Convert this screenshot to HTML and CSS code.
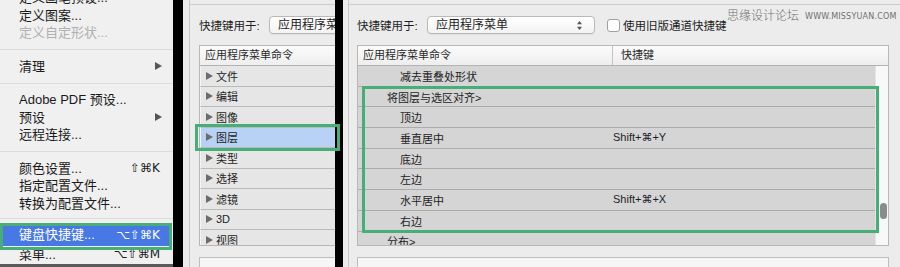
FILE: index.html
```html
<!DOCTYPE html>
<html lang="zh-CN">
<head>
    <meta charset="UTF-8">
    <title>键盘快捷键</title>
    <link rel="stylesheet" href="styles.css">
</head>
<body>
	<div class="menu">
		<ul class="menu-list">
			<li class="item">定义画笔预设...</li>
			<li class="item">定义图案...</li>
			<li class="item off">定义自定形状...</li>
			<li class="sep"></li>
			<li class="item">清理<span class="sub"></span></li>
			<li class="sep"></li>
			<li class="item">Adobe PDF 预设...</li>
			<li class="item">预设<span class="sub"></span></li>
			<li class="item">远程连接...</li>
			<li class="sep"></li>
			<li class="item">颜色设置...<span class="key">⇧⌘K</span></li>
			<li class="item">指定配置文件...</li>
			<li class="item">转换为配置文件...</li>
			<li class="sep sep-short"></li>
			<li class="item on">键盘快捷键...<span class="key">⌥⇧⌘K</span></li>
			<li class="item">菜单...<span class="key">⌥⇧⌘M</span></li>
		</ul>
	</div>

	<div class="dlg dlg-mid">
		<div class="frame">
			<div class="frame-top"></div>
			<div class="frame-body">
				<div class="bar">
					<span class="lbl">快捷键用于:</span>
					<div class="select">应用程序菜单</div>
				</div>
				<div class="tree">
					<div class="tree-head">应用程序菜单命令</div>
					<div class="tree-body">
						<div class="node"><i class="tri"></i>文件</div>
						<div class="node"><i class="tri"></i>编辑</div>
						<div class="node"><i class="tri"></i>图像</div>
						<div class="node sel"><i class="tri"></i>图层</div>
						<div class="node"><i class="tri"></i>类型</div>
						<div class="node"><i class="tri"></i>选择</div>
						<div class="node"><i class="tri"></i>滤镜</div>
						<div class="node"><i class="tri"></i>3D</div>
						<div class="node"><i class="tri"></i>视图</div>
					</div>
				</div>
				<div class="lower"></div>
			</div>
		</div>
	</div>

	<div class="dlg dlg-main">
		<div class="frame">
			<div class="frame-top"></div>
			<div class="frame-body">
				<div class="bar">
					<span class="lbl">快捷键用于:</span>
					<div class="select select-wide">应用程序菜单
						<svg class="updown" width="5" height="9" viewBox="0 0 5 9"><path d="M2.5 0 L5 3.2 L0 3.2 Z M2.5 9 L5 5.8 L0 5.8 Z" fill="#555"/></svg>
					</div>
					<span class="check"></span>
					<span class="check-lbl">使用旧版通道快捷键</span>
				</div>
				<div class="grid">
					<div class="grid-head">
						<div class="col-cmd">应用程序菜单命令</div>
						<div class="col-key">快捷键</div>
					</div>
					<div class="grid-body">
						<div class="rows">
							<div class="row"><span class="col-cmd lv2">减去重叠处形状</span></div>
							<div class="row"><span class="col-cmd lv1">将图层与选区对齐&gt;</span></div>
							<div class="row"><span class="col-cmd lv2">顶边</span></div>
							<div class="row"><span class="col-cmd lv2">垂直居中</span><span class="col-key">Shift+⌘+Y</span></div>
							<div class="row"><span class="col-cmd lv2">底边</span></div>
							<div class="row"><span class="col-cmd lv2">左边</span></div>
							<div class="row"><span class="col-cmd lv2">水平居中</span><span class="col-key">Shift+⌘+X</span></div>
							<div class="row"><span class="col-cmd lv2">右边</span></div>
							<div class="row"><span class="col-cmd lv1">分布&gt;</span></div>
						</div>
						<div class="track"><div class="thumb"></div></div>
					</div>
				</div>
				<div class="lower"></div>
			</div>
		</div>
	</div>

	<div class="watermark"><span class="wm-cn">思缘设计论坛</span><span class="wm-en">WWW.MISSYUAN.COM</span></div>

	<!-- 绿色标注框 -->
	<div class="mark mark-menu"></div>
	<div class="mark mark-mid"></div>
	<div class="mark mark-main"></div>
</body>
</html>
```

FILE: styles.css
```css
*{
	padding: 0;
	margin: 0;
	list-style: none;
	box-sizing: border-box;
}
body{
	width: 900px;
	height: 267px;
	overflow: hidden;
	position: relative;
	display: flex;
	background: #000;
	font-family: "Liberation Sans", "Noto Sans CJK SC", sans-serif;
	color: #1e1e1e;
}

/* 左边的菜单 */
.menu{
	width: 173px;
	margin-right: 10px;
	background: #f0f0f0;
	overflow: hidden;
	border-bottom: 3px solid #5a5a5a;
}
.menu-list{
	margin-top: -11px;
}
.menu .item{
	position: relative;
	height: 17.5px;
	line-height: 17.5px;
	padding-left: 19px;
	font-size: 13px;
	color: #1a1a1a;
	white-space: nowrap;
}
.menu .off{
	color: #b0b0b0;
}
.menu .sep{
	height: 16px;
	display: flex;
	align-items: center;
}
.menu .sep::after{
	content: "";
	flex: 1;
	height: 1px;
	background: #dcdcdc;
}
.menu .sep-short{
	height: 12px;
}
.menu .on{
	height: 22px;
	line-height: 22px;
	margin: 0 2px;
	padding-left: 17px;
	background: #4878e4;
	color: #fff;
}
.menu .sub{
	position: absolute;
	right: 11px;
	top: 4.5px;
	width: 0;
	height: 0;
	border-left: 7px solid #555;
	border-top: 4.5px solid transparent;
	border-bottom: 4.5px solid transparent;
}
.menu .key{
	position: absolute;
	right: 13px;
	top: 0;
	font-family: "DejaVu Sans", "Liberation Sans", sans-serif;
	font-size: 12px;
}
.menu .on .key{
	right: 11px;
}

/* 快捷键对话框 */
.dlg{
	background: #ececec;
	overflow: hidden;
	font-size: 11px;
}
.dlg-mid{
	width: 152px;
	margin-right: 8px;
	padding-left: 6px;
}
.dlg-main{
	flex: 1;
	padding-left: 5px;
}
.frame{
	height: 100%;
	border-left: 1px solid #c9c9c9;
}
.frame-top{
	height: 5px;
	border-bottom: 1px solid #cdcdcd;
}
.frame-body{
	padding-left: 9px;
}
.dlg-main .frame-body{
	padding-left: 8px;
}
.bar{
	margin-top: 10px;
	height: 20px;
	display: flex;
	align-items: center;
	white-space: nowrap;
	font-size: 11.5px;
}
.lbl{
	width: 70px;
	flex: none;
}
.select{
	flex: none;
	position: relative;
	width: 168px;
	height: 18px;
	line-height: 16px;
	padding-left: 8px;
	border: 1px solid #b9b9b9;
	border-radius: 4px;
	background: linear-gradient(#ffffff, #f3f3f3);
	box-shadow: 0 1px 0 rgba(0,0,0,0.06);
	font-size: 12px;
}
.updown{
	position: absolute;
	right: 12px;
	top: 4px;
}
.check{
	flex: none;
	width: 13px;
	height: 13px;
	margin-left: 12px;
	border: 1px solid #a0a0a0;
	border-radius: 3px;
	background: #fff;
}
.check-lbl{
	margin-left: 3px;
	font-size: 11.5px;
}

/* 中间的树 */
.tree{
	margin-top: 10px;
	width: 200px;
	border: 1px solid #b7b7b7;
	background: #fff;
}
.tree-head,.grid-head{
	height: 20px;
	line-height: 19px;
	padding-left: 5px;
	border-bottom: 1px solid #b3b3b3;
	background: linear-gradient(#fbfbfb, #eeeeee);
	color: #2a2a2a;
}
.tree-body{
	height: 179px;
	overflow: hidden;
	background: #e6e6e6;
}
.node{
	display: flex;
	align-items: center;
	height: 20.5px;
	padding-left: 5px;
	border-bottom: 1px solid #bababa;
	border-left: 1px solid #f4f4f4;
}
.node.sel{
	background: #b8d2f6;
}
.tri{
	width: 0;
	height: 0;
	margin-right: 3px;
	border-left: 7px solid #6c6c6c;
	border-top: 4.5px solid transparent;
	border-bottom: 4.5px solid transparent;
}

/* 右边的表格 */
.grid{
	margin-top: 10px;
	width: 532px;
	border: 1px solid #b7b7b7;
	background: #fff;
}
.grid-head{
	display: flex;
	padding-left: 0;
}
.grid-head .col-cmd{
	width: 255px;
	padding-left: 5px;
	border-right: 1px solid #c4c4c4;
}
.grid-head .col-key{
	padding-left: 8px;
}
.grid-body{
	display: flex;
	height: 179px;
}
.rows{
	flex: 1;
	overflow: hidden;
	background: #d5d5d5;
}
.row{
	display: flex;
	align-items: center;
	height: 20.7px;
	border-bottom: 1px solid #acacac;
}
.row .col-cmd{
	width: 255px;
}
.lv1{
	padding-left: 29px;
}
.lv2{
	padding-left: 42px;
}
.row .col-key{
	font-family: "Liberation Sans", "DejaVu Sans", sans-serif;
}
.track{
	width: 13px;
	background: #f8f8f8;
	border-left: 1px solid #e4e4e4;
	padding-top: 137px;
}
.thumb{
	width: 7px;
	height: 16px;
	margin-left: 4px;
	border-radius: 4px;
	background: #8b8b8b;
}
.lower{
	margin-top: 11px;
	width: 532px;
	height: 30px;
	border: 1px solid #bdbdbd;
	background: #f6f6f6;
}

/* 水印 */
.watermark{
	position: absolute;
	left: 727px;
	top: 6px;
	display: flex;
	align-items: center;
	color: #6f6f6f;
	white-space: nowrap;
}
.wm-cn{
	font-family: "Noto Sans CJK SC", sans-serif;
	font-size: 12px;
	font-weight: 300;
	line-height: 18px;
}
.wm-en{
	margin-left: 6px;
	margin-top: 3px;
	font-family: "DejaVu Sans", sans-serif;
	font-size: 8px;
	letter-spacing: 0.2px;
}

/* 标注框 */
.mark{
	position: absolute;
	border: 3px solid #48ae77;
}
.mark-menu{
	left: 0;
	top: 223px;
	width: 172px;
	height: 27px;
}
.mark-mid{
	left: 195px;
	top: 124px;
	width: 145px;
	height: 27px;
}
.mark-main{
	left: 362px;
	top: 86px;
	width: 517px;
	height: 147px;
}
```
